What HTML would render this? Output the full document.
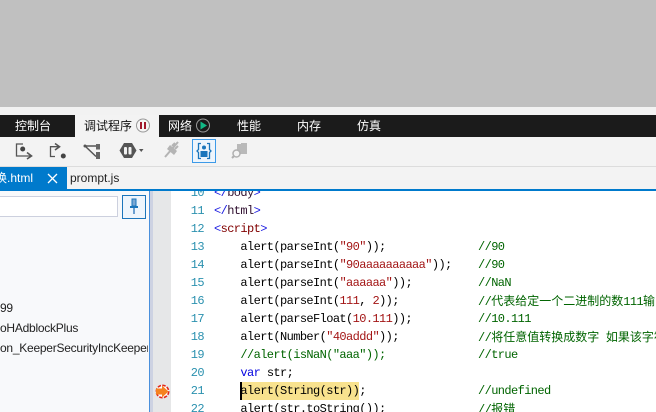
<!DOCTYPE html>
<html><head><meta charset="utf-8">
<style>
html,body{margin:0;padding:0;width:656px;height:412px;overflow:hidden;background:#fff}
body{position:relative;font-family:"Liberation Sans","Noto Sans CJK SC",sans-serif}
.a{position:absolute}
.t{position:absolute;top:115px;height:22px;line-height:22px;font-size:12px;color:#fff;white-space:nowrap}
.n{position:absolute;left:174px;width:30px;text-align:right;color:#2b91af;height:18px;font:12px/18px "Liberation Mono",monospace;letter-spacing:-.6px;white-space:pre}
.c{position:absolute;left:214px;height:18px;font:12px/18px "Liberation Mono","Noto Sans CJK SC",monospace;letter-spacing:-.6px;white-space:pre;color:#000}
.m{position:absolute;left:478px;height:18px;font:12px/18px "Liberation Mono","Noto Sans CJK SC",monospace;letter-spacing:-.6px;white-space:pre;color:#006400}
.m i{font-style:normal;font-family:"Noto Sans CJK SC",sans-serif;letter-spacing:0;font-size:12px}
.b{color:#1a1ae0}.p{color:#800000}.h{color:#301030}.s{color:#a31515}.g{color:#006400}.k{color:#0000e0}
.f{position:absolute;left:0;width:148px;overflow:hidden;white-space:pre;font-size:12px;line-height:18px;color:#222;letter-spacing:-.25px}
</style></head><body>
<div class="a" style="left:0;top:0;width:656px;height:107px;background:#c0c0c0"></div>
<div class="a" style="left:0;top:107px;width:656px;height:8px;background:#f2f2f2"></div>
<div class="a" style="left:0;top:115px;width:656px;height:22px;background:#1b1b1b"></div>
<div class="a" style="left:75px;top:115px;width:84px;height:22px;background:#f3f3f3"></div>
<div class="t" style="left:15px">控制台</div>
<div class="t" style="left:84px;color:#111">调试程序</div>
<svg class="a" style="left:135px;top:118px" width="16" height="16"><circle cx="8" cy="7.500" r="6.500" fill="#f5f5f5" stroke="#999"/><rect x="5" y="4" width="2" height="7" fill="#a1182c"/><rect x="9" y="4" width="2" height="7" fill="#a1182c"/></svg>
<div class="t" style="left:168px">网络</div>
<svg class="a" style="left:195px;top:118px" width="16" height="16"><circle cx="8" cy="7.500" r="6.500" fill="#1b1b1b" stroke="#999"/><path d="M5.500 3.500L12 7.500 5.500 11.500z" fill="#12b886"/></svg>
<div class="t" style="left:237px">性能</div>
<div class="t" style="left:297px">内存</div>
<div class="t" style="left:357px">仿真</div>

<div class="a" style="left:0;top:137px;width:656px;height:29px;background:#f3f3f3"></div>
<div class="a" style="left:0;top:166px;width:656px;height:1px;background:#dcdcdc"></div>
<svg class="a" style="left:0;top:137px" width="260" height="29" fill="none">
<path d="M23 7H16.500V19H31" stroke="#555" stroke-width="1.300"/>
<path d="M27 15.500L31.500 19 27 22" stroke="#555" stroke-width="1.600"/>
<circle cx="22.700" cy="12" r="2.500" fill="#444"/>
<path d="M59 9.700H50.500V19.500H55" stroke="#555" stroke-width="1.300"/>
<path d="M55 6.500L59.500 9.700 55 13" stroke="#555" stroke-width="1.600"/>
<circle cx="63.300" cy="19" r="2.500" fill="#444"/>
<path d="M85 9H96M85 9L96 19.500" stroke="#555" stroke-width="1.500"/>
<circle cx="85" cy="9" r="1.500" fill="#555"/>
<rect x="96" y="7" width="4" height="5.500" fill="#666"/><rect x="96" y="15" width="4" height="7" fill="#666"/>
<path d="M124 6H132L136.500 13.500 132 21H124L119.500 13.500z" fill="#555"/>
<rect x="124" y="10" width="3" height="7.500" rx="1" fill="#f3f3f3"/><rect x="128.500" y="10" width="3" height="7.500" rx="1" fill="#f3f3f3"/>
<path d="M139 12H143.500L141.250 15z" fill="#555"/>
<path d="M165 20L178 5" stroke="#b4b4b4" stroke-width="2"/>
<path d="M167 12L174 18 177 14 170 8z" fill="#b4b4b4"/>
<path d="M172 9L175 6M175 12L178 9" stroke="#b4b4b4" stroke-width="2"/>
<rect x="192.500" y="2.500" width="23" height="23" fill="#eef5fc" stroke="#3c9ae8"/>
<path d="M201 6.500H198.500V12.500L197 14 198.500 15.500V21.500H201M207 6.500H209.500V12.500L211 14 209.500 15.500V21.500H207" stroke="#1b75bb" stroke-width="1.300"/>
<circle cx="204" cy="10.500" r="2" fill="#1b75bb"/><rect x="200.500" y="14" width="7" height="6" fill="#1b75bb"/>
<path d="M237 7H241V6H247V17H237z" fill="#b9b9b9"/>
<circle cx="236.500" cy="16.500" r="3.500" fill="#f3f3f3" stroke="#b0b0b0" stroke-width="1.500"/>
<path d="M234 19L232 21" stroke="#b0b0b0" stroke-width="2"/>
</svg>

<div class="a" style="left:0;top:167px;width:656px;height:22px;background:#f3f3f3"></div>
<div class="a" style="left:0;top:167px;width:67px;height:22px;background:#007acc"></div>
<div class="a" style="left:-5px;top:167px;height:22px;line-height:22px;font-size:12px;color:#fff;white-space:nowrap">换.html</div>
<svg class="a" style="left:46px;top:172px" width="13" height="13"><path d="M2 2L11 11M11 2L2 11" stroke="#fff" stroke-width="1.300" fill="none"/></svg>
<div class="a" style="left:70px;top:167px;height:22px;line-height:22px;font-size:12px;color:#222">prompt.js</div>
<div class="a" style="left:0;top:189px;width:656px;height:2px;background:#007acc"></div>

<div class="a" style="left:0;top:191px;width:149px;height:221px;background:#f8f9fb"></div>
<div class="a" style="left:149px;top:191px;width:1px;height:221px;background:#4a90dc"></div>
<div class="a" style="left:150px;top:191px;width:3px;height:221px;background:#cdd2e2"></div>
<div class="a" style="left:153px;top:191px;width:18px;height:221px;background:#e6e7e8"></div>
<div class="a" style="left:-2px;top:196px;width:120px;height:21px;box-sizing:border-box;border:1px solid #ccd0de;background:#fff"></div>
<div class="a" style="left:122px;top:195px;width:24px;height:24px;box-sizing:border-box;border:1px solid #1b75bb;background:#eef5fc"></div>
<svg class="a" style="left:122px;top:195px" width="24" height="24"><path d="M10 4H14V11H10z" fill="#7aa7d3" stroke="#1b75bb"/><rect x="8" y="11" width="8" height="2" fill="#1b75bb"/><rect x="11" y="13" width="2" height="6" fill="#6c9fd0"/></svg>
<div class="f" style="top:299px">99</div>
<div class="f" style="top:319px">oHAdblockPlus</div>
<div class="f" style="top:339px">on_KeeperSecurityIncKeeper</div>

<svg class="a" style="left:155px;top:384px" width="15" height="15"><circle cx="7.500" cy="7.500" r="6.200" fill="#fff" stroke="#e3261a" stroke-width="1.600" stroke-dasharray="3.500 1.300"/><path d="M1 4.500H7V1.500L13.500 7.500 7 13.500V10.500H1z" fill="#f58220"/></svg>

<div class="a" style="left:171px;top:191px;width:485px;height:221px;overflow:hidden">
<div style="position:absolute;left:-171px;top:-191px;width:656px;height:412px">
<div class="n" style="top:184px">10</div><div class="c" style="top:184px"><span class="b">&lt;/</span><span class="h">body</span><span class="b">&gt;</span></div>
<div class="n" style="top:202px">11</div><div class="c" style="top:202px"><span class="b">&lt;/</span><span class="h">html</span><span class="b">&gt;</span></div>
<div class="n" style="top:220px">12</div><div class="c" style="top:220px"><span class="b">&lt;</span><span class="p">script</span><span class="b">&gt;</span></div>
<div class="n" style="top:238px">13</div><div class="c" style="top:238px">    alert(parseInt(<span class="s">"90"</span>));</div><div class="m" style="top:238px">//90</div>
<div class="n" style="top:256px">14</div><div class="c" style="top:256px">    alert(parseInt(<span class="s">"90aaaaaaaaaa"</span>));</div><div class="m" style="top:256px">//90</div>
<div class="n" style="top:274px">15</div><div class="c" style="top:274px">    alert(parseInt(<span class="s">"aaaaaa"</span>));</div><div class="m" style="top:274px">//NaN</div>
<div class="n" style="top:292px">16</div><div class="c" style="top:292px">    alert(parseInt(<span class="s">111</span>, <span class="s">2</span>));</div><div class="m" style="top:292px">//<i>代表给定一个二进制的数</i>111<i>输出</i></div>
<div class="n" style="top:310px">17</div><div class="c" style="top:310px">    alert(parseFloat(<span class="s">10.111</span>));</div><div class="m" style="top:310px">//10.111</div>
<div class="n" style="top:328px">18</div><div class="c" style="top:328px">    alert(Number(<span class="s">"40addd"</span>));</div><div class="m" style="top:328px">//<i>将任意值转换成数字</i> <i>如果该字符</i></div>
<div class="n" style="top:346px">19</div><div class="c" style="top:346px"><span class="g">    //alert(isNaN("aaa"));</span></div><div class="m" style="top:346px">//true</div>
<div class="n" style="top:364px">20</div><div class="c" style="top:364px">    <span class="k">var</span> str;</div>
<div class="a" style="left:241px;top:382px;width:118px;height:18px;background:#f8e28e"></div>
<div class="a" style="left:240px;top:382px;width:2px;height:18px;background:#000"></div>
<div class="n" style="top:382px">21</div><div class="c" style="top:382px">    alert(String(str));</div><div class="m" style="top:382px">//undefined</div>
<div class="n" style="top:400px">22</div><div class="c" style="top:400px">    alert(str.toString());</div><div class="m" style="top:400px">//<i>报错</i></div>
</div></div>
</body></html>
